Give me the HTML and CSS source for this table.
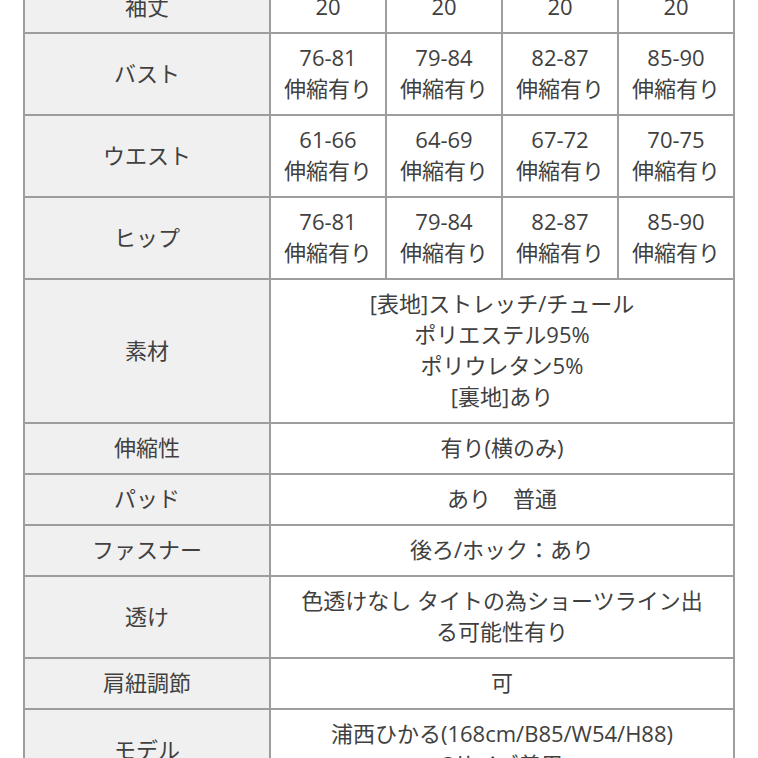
FILE: index.html
```html
<!DOCTYPE html>
<html lang="ja">
<head>
<meta charset="utf-8">
<link rel="stylesheet" href="styles.css">
</head>
<body>
<div class="page">
<table class="spec">
  <colgroup><col class="c-label"><col class="c-val"><col class="c-val"><col class="c-val"><col class="c-val"></colgroup>
  <tr><th>袖丈</th><td>20</td><td>20</td><td>20</td><td>20</td></tr>
  <tr><th>バスト</th><td>76-81<br>伸縮有り</td><td>79-84<br>伸縮有り</td><td>82-87<br>伸縮有り</td><td>85-90<br>伸縮有り</td></tr>
  <tr><th>ウエスト</th><td>61-66<br>伸縮有り</td><td>64-69<br>伸縮有り</td><td>67-72<br>伸縮有り</td><td>70-75<br>伸縮有り</td></tr>
  <tr><th>ヒップ</th><td>76-81<br>伸縮有り</td><td>79-84<br>伸縮有り</td><td>82-87<br>伸縮有り</td><td>85-90<br>伸縮有り</td></tr>
  <tr><th>素材</th><td colspan="4">[表地]ストレッチ/チュール<br>ポリエステル95%<br>ポリウレタン5%<br>[裏地]あり</td></tr>
  <tr><th>伸縮性</th><td colspan="4">有り(横のみ)</td></tr>
  <tr><th>パッド</th><td colspan="4">あり　普通</td></tr>
  <tr><th>ファスナー</th><td colspan="4">後ろ/ホック：あり</td></tr>
  <tr><th>透け</th><td colspan="4">色透けなし タイトの為ショーツライン出<br>る可能性有り</td></tr>
  <tr><th>肩紐調節</th><td colspan="4">可</td></tr>
  <tr><th>モデル</th><td colspan="4">浦西ひかる(168cm/B85/W54/H88)<br>Sサイズ着用</td></tr>
</table>
</div>
</body>
</html>
```
FILE: styles.css
```css
html, body {
  margin: 0;
  padding: 0;
  background: #ffffff;
  overflow: hidden;
}
.page {
  padding-left: 23px;
  height: 758px;
  overflow: hidden;
}
.spec {
  margin-top: -19px;
  border-collapse: collapse;
  table-layout: fixed;
  width: 711px;
  font-family: "Open Sans", "Noto Sans CJK JP", sans-serif;
  font-size: 22px;
  line-height: 31px;
  color: #404040;
}
.c-label { width: 246px; }
.c-val { width: 116px; }
.spec th, .spec td {
  border: 2px solid #9d9d9d;
  padding: 8px 4px 10px;
  text-align: center;
  vertical-align: middle;
  font-weight: 400;
  white-space: nowrap;
}
.spec th {
  background: #f0f0f0;
}
.spec td {
  background: #ffffff;
}
```
